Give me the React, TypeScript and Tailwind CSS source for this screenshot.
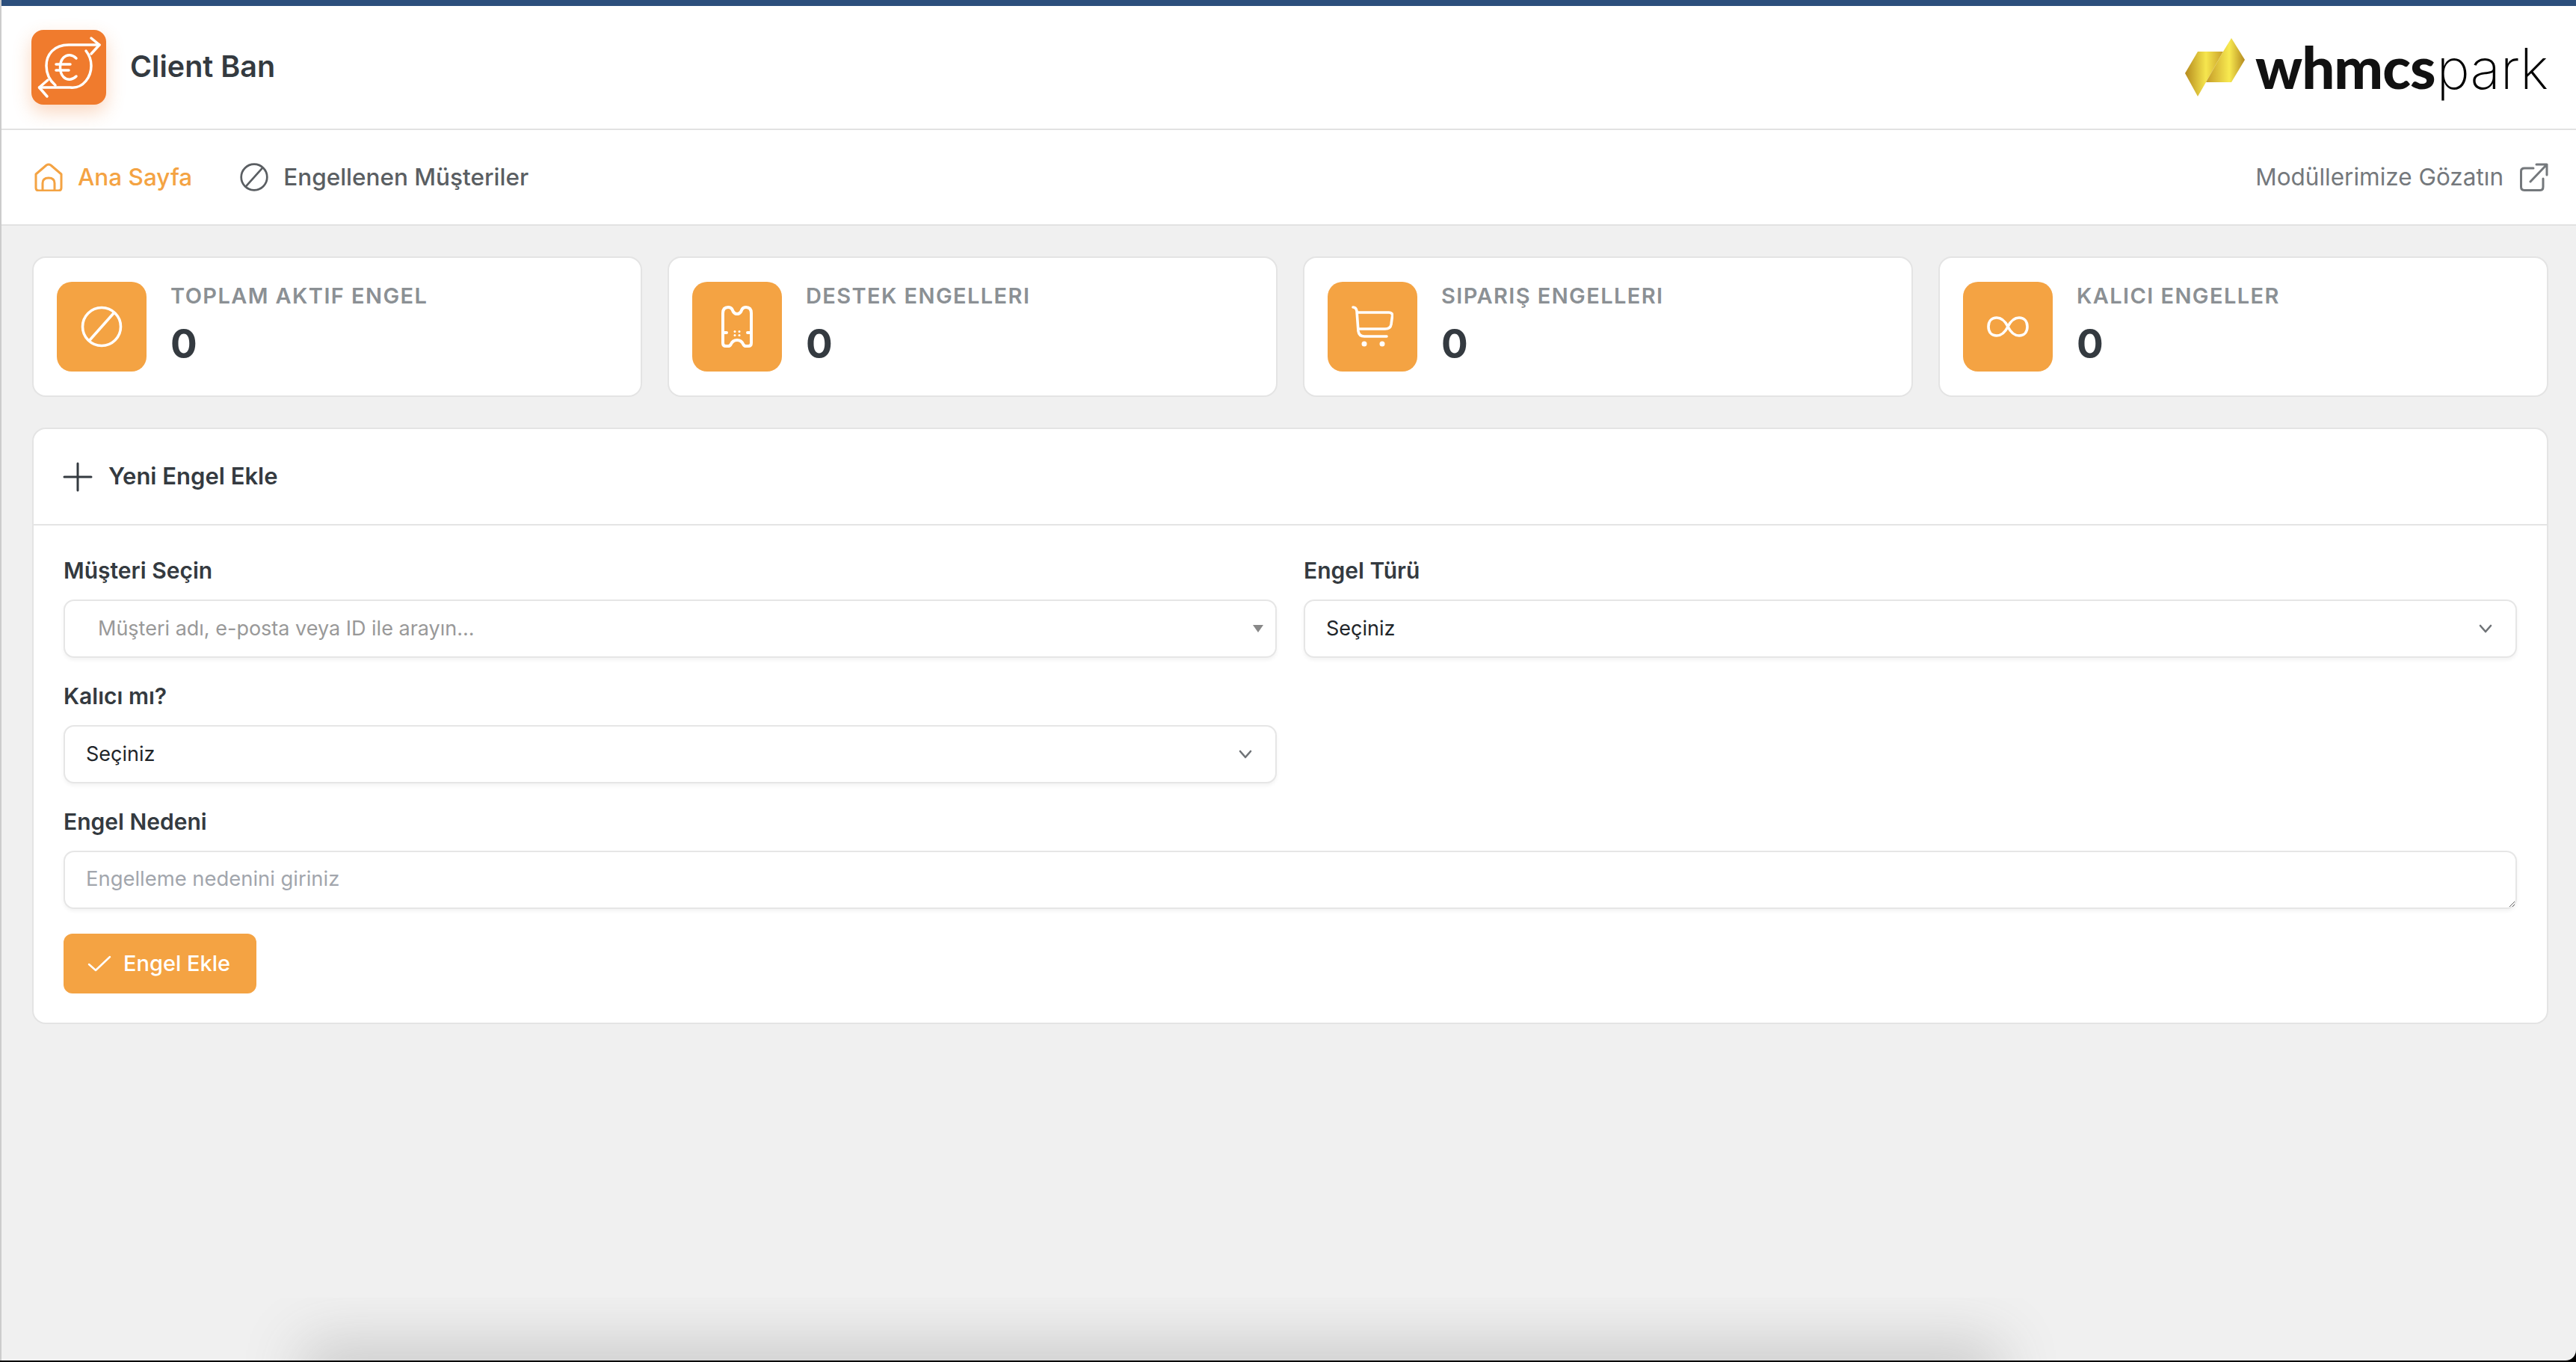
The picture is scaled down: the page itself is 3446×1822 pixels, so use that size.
import type { ReactNode } from "react";

function AppLogo() {
  return (
    <svg width="100" height="100" viewBox="0 0 100 100" fill="none" stroke="white" strokeWidth="3.5" strokeLinecap="round" strokeLinejoin="round">
      <path d="M80 11 L91 20 L80 32" />
      <path d="M91 20 H50 C30 20 20 33 20 48 C20 60 25 68 32 74" />
      <path d="M22 67 L10.5 77 L21 89" />
      <path d="M10.5 77 H52 C70 79 80 62 80 48 C80 40 77 33 73 28" />
      <path d="M60 38 C55 33 48 32 43 37 C37 43 37 57 43 63 C48 68 55 67 60 62" />
      <path d="M33 46 H52 M33 54 H50" />
    </svg>
  );
}

function BanIcon({ size, color, width }: { size: number; color: string; width: number }) {
  return (
    <svg width={size} height={size} viewBox="0 0 56 56" fill="none" stroke={color} strokeWidth={width} strokeLinecap="round">
      <circle cx="28" cy="28" r="25.5" />
      <path d="M44 10 L12 46" />
    </svg>
  );
}

function TicketIcon() {
  return (
    <svg width="42" height="56" viewBox="0 0 42 56" fill="none" stroke="white" strokeWidth="4" strokeLinecap="round" strokeLinejoin="round">
      <path d="M2 10 Q2 2 9 2 Q13 2 14.5 5 Q16.5 11 21 11 Q25.5 11 27.5 5 Q29 2 33 2 Q40 2 40 10 V50 Q40 54 36 54 H33 Q30.5 54 29.5 52 Q27 46 21 46 Q15 46 12.5 52 Q11.5 54 9 54 H6 Q2 54 2 50 Z" />
      <path d="M3 36 H7 M35 36 H39" />
      <circle cx="18" cy="34.5" r="1.5" fill="white" stroke="none" />
      <circle cx="24" cy="34.5" r="1.5" fill="white" stroke="none" />
      <circle cx="18" cy="39.5" r="1.5" fill="white" stroke="none" />
      <circle cx="24" cy="39.5" r="1.5" fill="white" stroke="none" />
    </svg>
  );
}

function CartIcon() {
  return (
    <svg width="56" height="56" viewBox="0 0 56 56" fill="none" stroke="white" strokeWidth="3.6" strokeLinecap="round" strokeLinejoin="round">
      <path d="M2 2 Q6 2 7 7 L9 34 Q10 41 17 41 H47" />
      <path d="M8 9 H50 Q55 9 54.5 14 L53 25 Q52 31 45 31 H10" />
      <circle cx="17" cy="51" r="3.5" fill="white" stroke="none" />
      <circle cx="41" cy="51" r="3.5" fill="white" stroke="none" />
    </svg>
  );
}

function InfinityIcon() {
  return (
    <svg width="56" height="28" viewBox="0 0 56 28" fill="none" stroke="white" strokeWidth="3.6">
      <path d="M28 14 C24 6 19 2 13 2 C6 2 2 7 2 14 C2 21 6 26 13 26 C19 26 24 22 28 14 C32 6 37 2 43 2 C50 2 54 7 54 14 C54 21 50 26 43 26 C37 26 32 22 28 14 Z" />
    </svg>
  );
}

function Chevron() {
  return (
    <svg width="20" height="12" viewBox="0 0 20 12" fill="none" stroke="#6f7377" strokeWidth="2.6" strokeLinecap="round" strokeLinejoin="round">
      <path d="M3 2 L10 10 L17 2" />
    </svg>
  );
}

function StatCard({ icon, label }: { icon: ReactNode; label: string }) {
  return (
    <div className="flex h-[188px] items-center gap-[32px] rounded-[18px] border-2 border-[#e4e4e4] bg-white px-[31px]">
      <div className="flex h-[120px] w-[120px] items-center justify-center rounded-[20px] bg-[#f4a343]">{icon}</div>
      <div className="flex flex-col pb-[4px]">
        <span className="text-[29px] leading-[34px] font-semibold tracking-[1.4px] text-[#8b9094]">{label}</span>
        <span className="mt-[16px] text-[53px] leading-[62px] font-bold text-[#343a40]">0</span>
      </div>
    </div>
  );
}

function Field({ label, children, className }: { label: string; children: ReactNode; className?: string }) {
  return (
    <div className={className}>
      <div className="mb-[21px] text-[30px] leading-[36px] font-semibold text-[#343a40]">{label}</div>
      {children}
    </div>
  );
}

const inputBox = "h-[78px] rounded-[14px] border-2 border-[#e6e6e6] bg-white shadow-[0_3px_5px_rgba(0,0,0,0.05)]";

function SelectBox() {
  return (
    <div className={`flex items-center justify-between pr-[30px] pl-[28px] text-[27px] text-[#212529] ${inputBox}`}>
      <span>Seçiniz</span>
      <Chevron />
    </div>
  );
}

export default function App() {
  return (
    <div className="h-[1822px] w-[3446px] overflow-hidden bg-black pb-[2px] font-['Inter',sans-serif]">
      <div className="relative flex h-full flex-col overflow-hidden rounded-br-[14px] border-l-2 border-[#cccccc] bg-[#f0f0f0]">
        <div className="h-[8px] shrink-0 bg-[#2c4f7c]" />

        <header className="flex h-[166px] shrink-0 items-center justify-between border-b-2 border-[#e2e2e2] bg-white pr-[37px] pl-[40px]">
          <div className="flex items-center gap-[32px]">
            <div className="flex h-[100px] w-[100px] items-center justify-center rounded-[16px] bg-[#f07b2d] shadow-[0_10px_24px_rgba(240,123,45,0.3)]">
              <AppLogo />
            </div>
            <span className="text-[39.5px] font-semibold text-[#343a40]">Client Ban</span>
          </div>
          <div className="flex items-center gap-[14px]">
            <svg width="80" height="78" viewBox="0 0 80 78">
              <defs>
                <linearGradient id="goldLeft" x1="0" y1="0.5" x2="1" y2="0.5">
                  <stop offset="0" stopColor="#b58a1e" />
                  <stop offset="0.55" stopColor="#f6e64e" />
                  <stop offset="1" stopColor="#c9a02a" />
                </linearGradient>
                <linearGradient id="goldRight" x1="0" y1="0.5" x2="1" y2="0.5">
                  <stop offset="0" stopColor="#c49a28" />
                  <stop offset="0.6" stopColor="#f8ea50" />
                  <stop offset="1" stopColor="#b48a20" />
                </linearGradient>
              </defs>
              <path d="M0 47 L17 18 H51 L28 59 L17 78 Z" fill="url(#goldLeft)" />
              <path d="M62 0 L80 29 L62 59 H28 L51 18 Z" fill="url(#goldRight)" />
            </svg>
            <div className="flex items-baseline text-[#111111]">
              <span className="font-['Lato',sans-serif] text-[78px] leading-[90px] font-black tracking-[-1px]">whmcs</span>
              <span className="ml-[2px] text-[75px] leading-[90px] font-extralight text-black">park</span>
            </div>
          </div>
        </header>

        <nav className="flex h-[128px] shrink-0 items-center justify-between border-b-2 border-[#e2e2e2] bg-white pr-[37px] pl-[44px] text-[31.5px]">
          <div className="flex items-center">
            <div className="flex items-center gap-[20px] font-medium text-[#f4a343]">
              <svg width="38" height="38" viewBox="0 0 38 38" fill="none" stroke="#f4a343" strokeWidth="3" strokeLinecap="round" strokeLinejoin="round">
                <path d="M2 15 L16 3 Q19 1 22 3 L36 15 V33 Q36 37 32 37 H6 Q2 37 2 33 Z" />
                <path d="M11 37 V27 Q11 20 19 20 Q27 20 27 27 V37" />
              </svg>
              <span>Ana Sayfa</span>
            </div>
            <div className="ml-[64px] flex items-center gap-[20px] font-medium text-[#5a5e62]">
              <BanIcon size={38} color="#5a5e62" width={4} />
              <span>Engellenen Müşteriler</span>
            </div>
          </div>
          <div className="flex items-center gap-[22px] text-[#74787c]">
            <span>Modüllerimize Gözatın</span>
            <svg width="38" height="38" viewBox="0 0 38 38" fill="none" stroke="#74787c" strokeWidth="3" strokeLinecap="round" strokeLinejoin="round">
              <path d="M18 7 H6 Q1.5 7 1.5 11 V32 Q1.5 36.5 6 36.5 H27 Q31 36.5 31 32 V21" />
              <path d="M14 25 L36 2 M22 2 H36 V16" />
            </svg>
          </div>
        </nav>

        <main className="flex-1 pt-[41px] pr-[37px] pl-[41px]">
          <div className="grid grid-cols-4 gap-[34px]">
            <StatCard icon={<BanIcon size={56} color="white" width={3.6} />} label="TOPLAM AKTIF ENGEL" />
            <StatCard icon={<TicketIcon />} label="DESTEK ENGELLERI" />
            <StatCard icon={<CartIcon />} label="SIPARIŞ ENGELLERI" />
            <StatCard icon={<InfinityIcon />} label="KALICI ENGELLER" />
          </div>

          <section className="mt-[41px] rounded-[18px] border-2 border-[#e4e4e4] bg-white">
            <div className="flex h-[129px] items-center gap-[21px] border-b-2 border-[#e4e4e4] px-[39px]">
              <svg width="40" height="40" viewBox="0 0 40 40" fill="none" stroke="#343a40" strokeWidth="3" strokeLinecap="round">
                <path d="M20 2 V38 M2 20 H38" />
              </svg>
              <span className="text-[31px] font-semibold text-[#343a40]">Yeni Engel Ekle</span>
            </div>

            <div className="px-[40px] pt-[42px] pb-[39px]">
              <div className="grid grid-cols-2 gap-x-[36px] gap-y-[33px]">
                <Field label="Müşteri Seçin">
                  <div className={`flex items-center justify-between pr-[16px] pl-[44px] text-[27px] text-[#999999] ${inputBox}`}>
                    <span>Müşteri adı, e-posta veya ID ile arayın...</span>
                    <svg width="14" height="12" viewBox="0 0 14 12" fill="#888888">
                      <path d="M0 1 H14 L7 11 Z" />
                    </svg>
                  </div>
                </Field>
                <Field label="Engel Türü">
                  <SelectBox />
                </Field>
                <Field label="Kalıcı mı?">
                  <SelectBox />
                </Field>
                <div />
                <Field label="Engel Nedeni" className="col-span-2">
                  <textarea
                    placeholder="Engelleme nedenini giriniz"
                    className={`block w-full px-[28px] py-[16px] text-[27.4px] leading-[38px] placeholder:text-[#a2a6ad] ${inputBox}`}
                  />
                </Field>
              </div>

              <div className="mt-[33px] flex h-[80px] w-[258px] items-center gap-[16px] rounded-[12px] bg-[#f4a343] pl-[32px] text-[29px] font-medium text-white">
                <svg width="32" height="22" viewBox="0 0 32 22" fill="none" stroke="white" strokeWidth="2.5" strokeLinecap="round" strokeLinejoin="round">
                  <path d="M2 12 L11 20 L30 2" />
                </svg>
                <span>Engel Ekle</span>
              </div>
            </div>
          </section>
        </main>

        {/* shadow rising from the window's bottom edge */}
        <div className="absolute bottom-0 left-[300px] h-[84px] w-[2480px] overflow-hidden">
          <div className="absolute top-[84px] left-[126px] h-[40px] w-[2224px] shadow-[0_0_80px_24px_#cacaca]" />
        </div>
      </div>
    </div>
  );
}
